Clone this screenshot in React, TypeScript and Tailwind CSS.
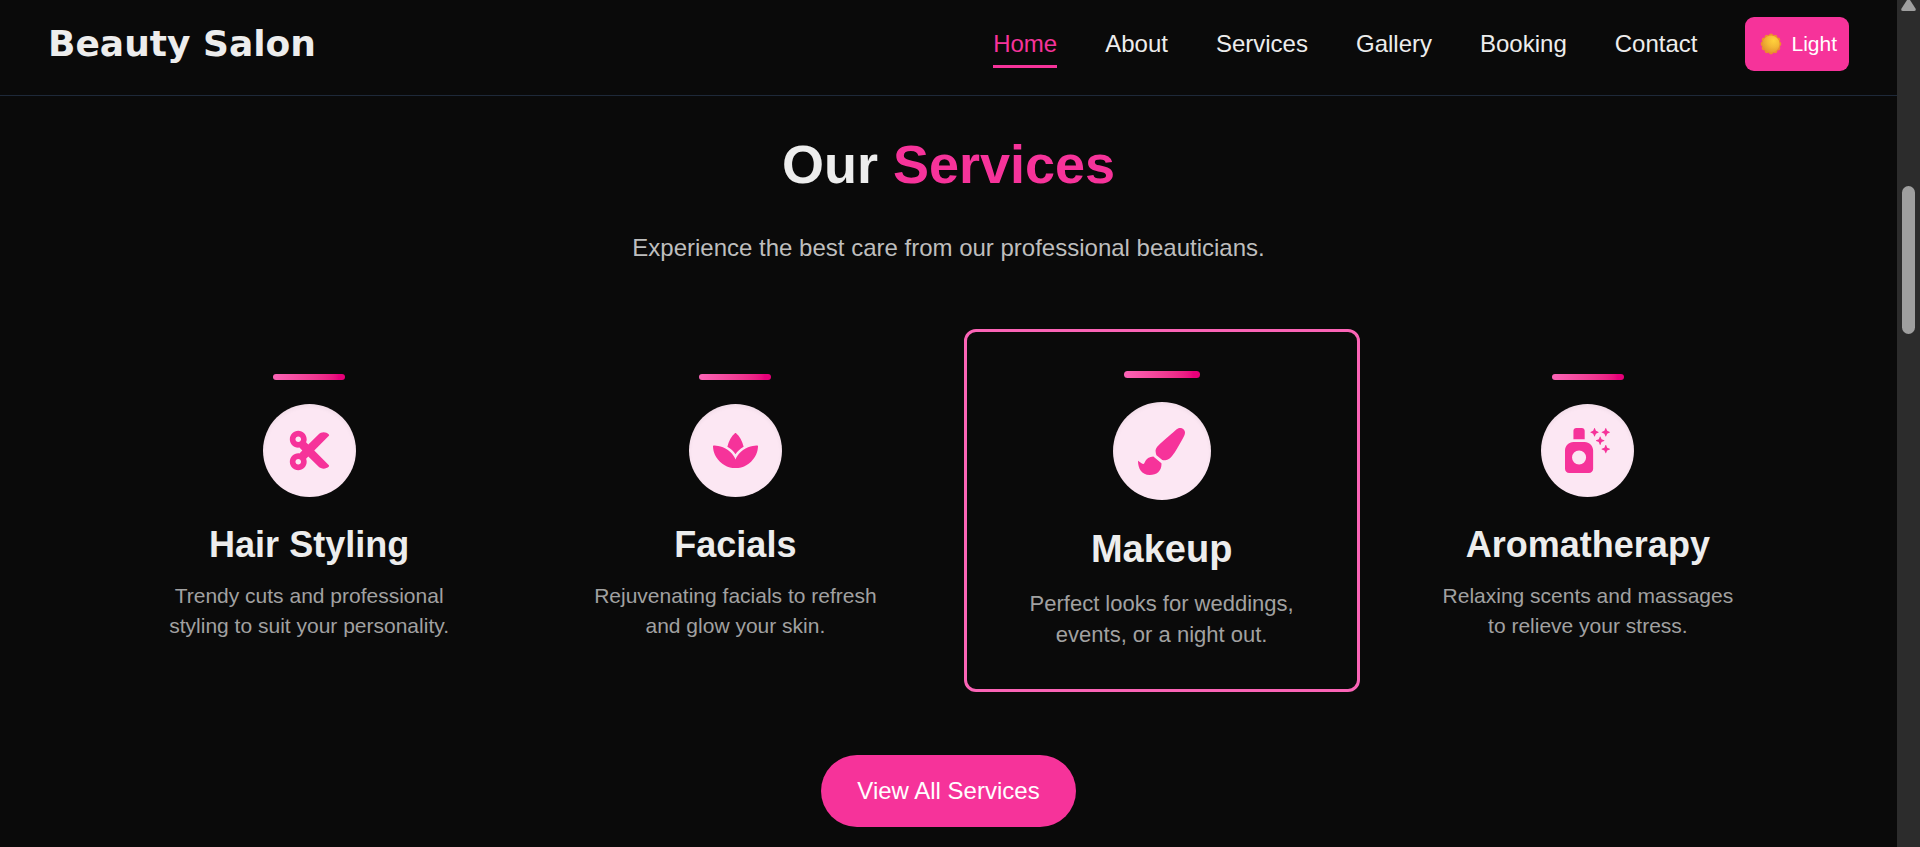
import React from "react";
import type { IconType } from "react-icons";
import { FaCut, FaPaintBrush, FaSpa } from "react-icons/fa";
import { FaSprayCanSparkles } from "react-icons/fa6";

interface Service {
  title: string;
  description: string;
  icon: IconType;
  featured?: boolean;
}

const navLinks = ["Home", "About", "Services", "Gallery", "Booking", "Contact"];

const services: Service[] = [
  {
    title: "Hair Styling",
    description: "Trendy cuts and professional styling to suit your personality.",
    icon: FaCut,
  },
  {
    title: "Facials",
    description: "Rejuvenating facials to refresh and glow your skin.",
    icon: FaSpa,
  },
  {
    title: "Makeup",
    description: "Perfect looks for weddings, events, or a night out.",
    icon: FaPaintBrush,
    featured: true,
  },
  {
    title: "Aromatherapy",
    description: "Relaxing scents and massages to relieve your stress.",
    icon: FaSprayCanSparkles,
  },
];

function SunIcon() {
  return (
    <svg viewBox="0 0 28 28" className="h-7 w-7" aria-hidden="true">
      <defs>
        <radialGradient id="sunFace" cx="0.65" cy="0.3" r="0.75">
          <stop offset="0" stopColor="#ffd23c" />
          <stop offset="0.5" stopColor="#f4b935" />
          <stop offset="1" stopColor="#e3952f" />
        </radialGradient>
      </defs>
      {/* scalloped rim */}
      <g fill="#ee8a30">
        {Array.from({ length: 12 }, (_, i) => {
          const a = (i * Math.PI) / 6;
          return <circle key={i} cx={14 + 8 * Math.cos(a)} cy={14 + 8 * Math.sin(a)} r="2.4" />;
        })}
      </g>
      <circle cx="14" cy="14" r="8.6" fill="url(#sunFace)" />
    </svg>
  );
}

function Navbar() {
  return (
    <header className="flex items-center justify-between border-b border-gray-800 px-12 pt-[17px] pb-6">
      <a href="#home" className="font-['DejaVu_Sans',sans-serif] text-4xl font-black text-[#ededed]">
        Beauty Salon
      </a>
      <nav className="flex items-center gap-12 text-2xl leading-9">
        {navLinks.map((link, index) => (
          <a
            key={link}
            href={`#${link.toLowerCase()}`}
            className={index === 0 ? "relative text-pink-500" : "text-[#ededed]"}
          >
            {link}
            {index === 0 && <span className="absolute inset-x-0 -bottom-1.5 h-[3px] bg-pink-500" />}
          </a>
        ))}
        <button
          type="button"
          className="flex h-[54px] items-center gap-1.5 rounded-[9px] bg-pink-500 px-3 text-[21px] text-white"
        >
          <SunIcon />
          Light
        </button>
      </nav>
    </header>
  );
}

function ServiceCard({ title, description, icon: Icon, featured }: Service) {
  if (featured) {
    return (
      <article className="-mx-[9px] -my-[9px] flex flex-col items-center rounded-xl border-3 border-pink-400 px-[38px] pt-[39px] pb-9 text-center">
        <div className="h-[7px] w-[76px] rounded-full bg-linear-to-r from-pink-400 to-pink-600" />
        <div className="mt-6 flex h-[98px] w-[98px] items-center justify-center rounded-full bg-pink-100 text-pink-500 shadow-inner">
          <Icon size={47} />
        </div>
        <h3 className="mt-6 text-[38px] leading-[50px] font-bold">{title}</h3>
        <p className="mt-3.5 text-[22px] leading-[31px] text-[#a1a1a1]">{description}</p>
      </article>
    );
  }

  return (
    <article className="flex flex-col items-center px-9 pt-9 pb-[42px] text-center">
      <div className="h-1.5 w-18 rounded-full bg-linear-to-r from-pink-400 to-pink-600" />
      <div className="mt-6 flex h-[93px] w-[93px] items-center justify-center rounded-full bg-pink-100 text-pink-500 shadow-inner">
        <Icon size={45} />
      </div>
      <h3 className="mt-6 text-4xl leading-12 font-bold">{title}</h3>
      <p className="mt-3 text-[21px] leading-[30px] text-[#a1a1a1]">{description}</p>
    </article>
  );
}

function Services() {
  return (
    <section id="services" className="flex flex-col items-center px-[120px] pt-[38px] pb-5">
      <h2 className="text-[54px] leading-15 font-bold">
        Our <span className="text-pink-500">Services</span>
      </h2>
      <p className="mt-9 text-2xl leading-9 text-[#bebebe]">
        Experience the best care from our professional beauticians.
      </p>
      <div className="mt-18 grid w-full grid-cols-4 gap-12">
        {services.map((service) => (
          <ServiceCard key={service.title} {...service} />
        ))}
      </div>
      <button type="button" className="mt-18 rounded-full bg-pink-500 px-9 py-[18px] text-2xl leading-9 text-white">
        View All Services
      </button>
    </section>
  );
}

function ScrollRail() {
  return (
    <div className="flex w-[23px] shrink-0 flex-col items-center bg-[#2c2c2c]" aria-hidden="true">
      <svg viewBox="0 0 15 11" className="h-[11px] w-[15px]" fill="#9f9f9f">
        <path d="M6 0h3l5.500 8.500q1 2.500-1.500 2.500H2Q-.5 11 .5 8.500z" />
      </svg>
      <div className="mt-[175px] h-[148px] w-[13px] rounded-full bg-[#9f9f9f]" />
    </div>
  );
}

export default function App() {
  return (
    <div className="flex min-h-screen bg-[#0a0a0a] font-['Liberation_Sans',Arial,sans-serif] text-[#ededed]">
      <div className="min-w-0 flex-1">
        <Navbar />
        <main>
          <Services />
        </main>
      </div>
      <ScrollRail />
    </div>
  );
}
